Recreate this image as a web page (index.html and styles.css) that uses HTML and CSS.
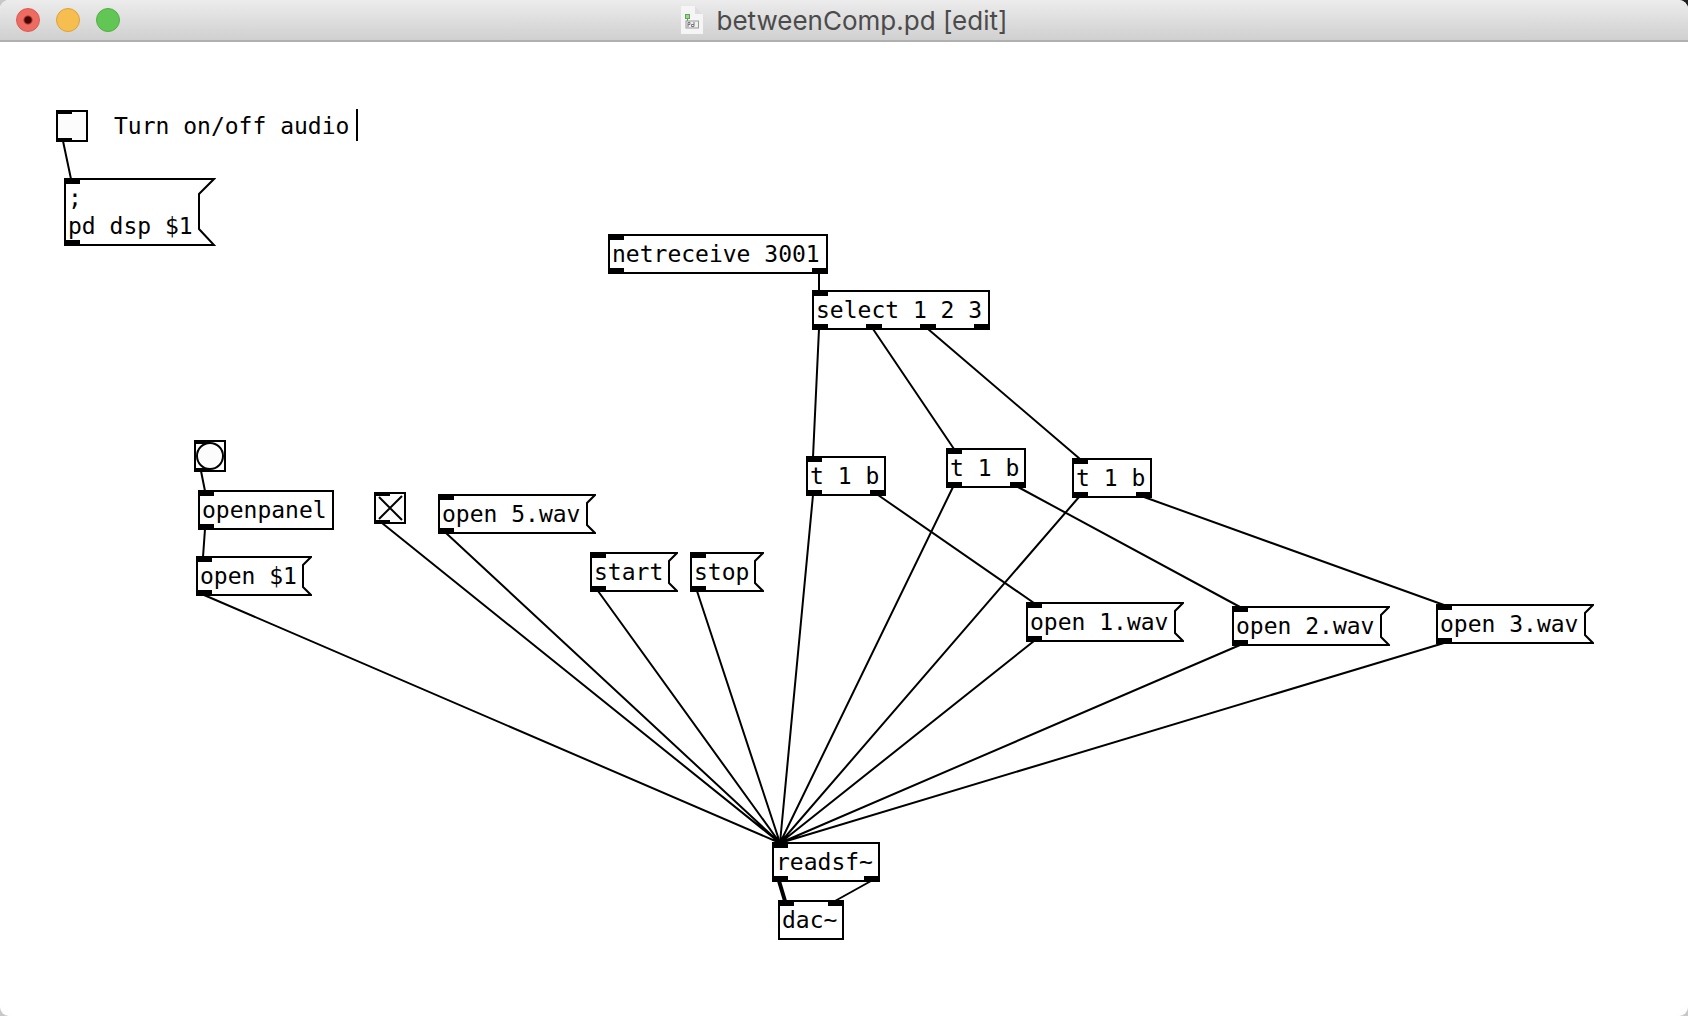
FILE: index.html
```html
<!DOCTYPE html>
<html lang="en">
<head>
<meta charset="utf-8">
<title>betweenComp.pd</title>
<link rel="stylesheet" href="styles.css">
</head>
<body>
<div class="window">
  <header class="titlebar">
    <div class="controls">
      <button class="light close" aria-label="Close"></button>
      <button class="light minimize" aria-label="Minimize"></button>
      <button class="light zoom" aria-label="Zoom"></button>
    </div>
    <h1 class="title">
      <svg class="doc" width="22" height="28" viewBox="0 0 22 28" aria-hidden="true">
        <path d="M0 0H14L22 8V28H0Z" fill="#f5f5f5"/>
        <path d="M14 0V8H22Z" fill="#dedede"/>
        <rect x="4.500" y="8.500" width="4" height="4" fill="#8fe07f" stroke="#6f9b69"/>
        <path d="M6.500 13V15" stroke="#888"/>
        <rect x="5" y="15" width="12.500" height="7" fill="#f0f0f0" stroke="#999"/>
        <path d="M7 21V16.500H9V18.500H7M13 16V20.500H10.500V18.500H13" fill="none" stroke="#777"/>
      </svg>
      <span>betweenComp.pd [edit]</span>
    </h1>
  </header>

  <main class="canvas">
    <svg class="wires" aria-hidden="true">
      <path d="M63 99L71 137M819 231V249M819 287L813 415M873 287L954 407M928 287L1080 417"/>
      <path d="M878 453L1034 561M1018 445L1240 565M1144 455L1444 563"/>
      <path d="M201 429L205 449M205 487L203 515"/>
      <path d="M204 553L780 801M382 481L780 801M446 491L780 801M598 549L780 801M697 549L780 801"/>
      <path d="M813 453L780 801M953 445L780 801M1079 455L780 801M1034 599L780 801M1240 603L780 801M1444 601L780 801"/>
      <path d="M871 839L835 859"/>
      <path class="signal" d="M779 839L785 859"/>
    </svg>

    <div class="node toggle audio">
      <input type="checkbox" id="audio"><i class="port in"></i><i class="port out"></i>
    </div>
    <label class="node comment" for="audio">Turn on/off audio</label>

    <button class="node message dsp"><span class="body">;<br>pd dsp $1</span><svg class="flag" width="18" height="68" viewBox="0 0 18 68"><path d="M0 1H16L1 16V51L16 67H0"/></svg><i class="port in"></i><i class="port out"></i></button>

    <div class="node object netreceive">netreceive 3001<i class="port in"></i><i class="port out"></i><i class="port out last"></i></div>
    <div class="node object select">select 1 2 3<i class="port in"></i><i class="port out"></i><i class="port out second"></i><i class="port out third"></i><i class="port out last"></i></div>

    <button class="node bang" aria-label="Bang"><svg width="32" height="32" viewBox="0 0 32 32"><circle cx="16" cy="16" r="13"/></svg><i class="port in"></i><i class="port out"></i></button>
    <div class="node object openpanel">openpanel<i class="port in"></i><i class="port out"></i></div>
    <button class="node message open-arg"><span class="body">open $1</span><svg class="flag" width="10" height="40" viewBox="0 0 10 40"><path d="M0 1H9L1 9V31L9 39H0"/></svg><i class="port in"></i><i class="port out"></i></button>

    <div class="node toggle play">
      <input type="checkbox" id="play" aria-label="Play" checked><svg width="32" height="32" viewBox="0 0 32 32"><path d="M5 5L28 28M28 4L5 27"/></svg><i class="port in"></i><i class="port out"></i>
    </div>
    <button class="node message open-5"><span class="body">open 5.wav</span><svg class="flag" width="10" height="40" viewBox="0 0 10 40"><path d="M0 1H9L1 9V31L9 39H0"/></svg><i class="port in"></i><i class="port out"></i></button>
    <button class="node message start"><span class="body">start</span><svg class="flag" width="10" height="40" viewBox="0 0 10 40"><path d="M0 1H9L1 9V31L9 39H0"/></svg><i class="port in"></i><i class="port out"></i></button>
    <button class="node message stop"><span class="body">stop</span><svg class="flag" width="10" height="40" viewBox="0 0 10 40"><path d="M0 1H9L1 9V31L9 39H0"/></svg><i class="port in"></i><i class="port out"></i></button>

    <div class="node object trigger-1">t 1 b<i class="port in"></i><i class="port out"></i><i class="port out last"></i></div>
    <div class="node object trigger-2">t 1 b<i class="port in"></i><i class="port out"></i><i class="port out last"></i></div>
    <div class="node object trigger-3">t 1 b<i class="port in"></i><i class="port out"></i><i class="port out last"></i></div>

    <button class="node message open-1"><span class="body">open 1.wav</span><svg class="flag" width="10" height="40" viewBox="0 0 10 40"><path d="M0 1H9L1 9V31L9 39H0"/></svg><i class="port in"></i><i class="port out"></i></button>
    <button class="node message open-2"><span class="body">open 2.wav</span><svg class="flag" width="10" height="40" viewBox="0 0 10 40"><path d="M0 1H9L1 9V31L9 39H0"/></svg><i class="port in"></i><i class="port out"></i></button>
    <button class="node message open-3"><span class="body">open 3.wav</span><svg class="flag" width="10" height="40" viewBox="0 0 10 40"><path d="M0 1H9L1 9V31L9 39H0"/></svg><i class="port in"></i><i class="port out"></i></button>

    <div class="node object readsf">readsf~<i class="port in"></i><i class="port out"></i><i class="port out last"></i></div>
    <div class="node object dac">dac~<i class="port in"></i><i class="port in last"></i></div>
  </main>
</div>
</body>
</html>
```
FILE: styles.css
```css
* { box-sizing: border-box; }

body {
  margin: 0;
  background: linear-gradient(#202020, #202020) top right / 20px 20px no-repeat #c8c8c8;
}

.window {
  display: flex;
  flex-direction: column;
  min-height: 100vh;
  border-radius: 9px;
  overflow: hidden;
  background: #fff;
}

/* Title bar */
.titlebar {
  display: grid;
  grid-template-columns: 1fr auto 1fr;
  align-items: center;
  height: 42px;
  padding: 0 16px;
  border-bottom: 2px solid #b0b0b0;
  background: linear-gradient(#ececec, #d0d0d0);
}

.controls { display: flex; gap: 16px; }

.light {
  width: 24px;
  height: 24px;
  padding: 0;
  border: 1px solid;
  border-radius: 50%;
}

.close {
  border-color: #d9574e;
  background: radial-gradient(circle, #480604 0 3px, #ed6b60 5px);
}

.minimize { border-color: #dba23c; background: #f6be4f; }
.zoom { border-color: #54ae44; background: #62c655; }

.title {
  display: flex;
  align-items: center;
  gap: 14px;
  margin: 0;
  padding-top: 2px;
  font: 400 26px/32px Inter, "Liberation Sans", sans-serif;
  color: #4b4b4b;
}

.doc { margin-bottom: 2px; }

/* Patch canvas */
.canvas {
  position: relative;
  flex: 1;
  min-height: 920px;
  font: 23px/28px "DejaVu Sans Mono", monospace;
  color: #000;
}

.wires {
  position: absolute;
  inset: 0;
  width: 100%;
  height: 100%;
  fill: none;
  stroke: #000;
  stroke-width: 2;
}

.signal { stroke-width: 4; }

.node {
  position: absolute;
  margin: 0;
  font: inherit;
  color: inherit;
  white-space: nowrap;
  text-align: left;
}

.object {
  height: 40px;
  padding: 4px 2px;
  border: 2px solid #000;
  background: #fff;
}

.message {
  display: flex;
  padding: 0;
  border: 0;
  background: none;
}

.body {
  flex: 1;
  padding: 4px 2px;
  border: solid #000;
  border-width: 2px 0 2px 2px;
}

.flag {
  display: block;
  flex: none;
  fill: none;
  stroke: #000;
  stroke-width: 2;
}

.toggle,
.bang {
  width: 32px;
  height: 32px;
}

.toggle input,
.bang {
  padding: 0;
  border: 2px solid #000;
  background: #fcfcfc;
}

.toggle input {
  display: block;
  appearance: none;
  width: 100%;
  height: 100%;
  margin: 0;
}

.toggle svg,
.bang svg {
  position: absolute;
  fill: none;
  stroke: #000;
  stroke-width: 2;
}

.toggle svg { inset: 0; }
.bang svg { inset: -2px; }

/* Inlets and outlets */
.port {
  position: absolute;
  left: 0;
  width: 16px;
  height: 6px;
  background: #000;
}

.in { top: 0; }
.out { bottom: 0; }
.toggle .port { height: 4px; }
.object .port, .bang .port { left: -2px; }
.object .in, .bang .in { top: -2px; }
.object .out, .bang .out { bottom: -2px; }
.bang .port { height: 4px; }
.object .port.last { left: auto; right: -2px; }
.object .port.second { left: 52px; }
.object .port.third { left: 106px; }

/* Node places on the canvas */
.audio { left: 56px; top: 68px; }
.comment { left: 114px; top: 67px; padding: 3px 0 1px; border-right: 2px solid #000; width: 244px; }
.dsp { left: 64px; top: 136px; width: 152px; }
.netreceive { left: 608px; top: 192px; width: 220px; }
.select { left: 812px; top: 248px; width: 178px; }
.bang { left: 194px; top: 398px; }
.openpanel { left: 198px; top: 448px; width: 136px; }
.open-arg { left: 196px; top: 514px; width: 116px; }
.play { left: 374px; top: 450px; }
.open-5 { left: 438px; top: 452px; width: 158px; }
.start { left: 590px; top: 510px; width: 88px; }
.stop { left: 690px; top: 510px; width: 74px; }
.trigger-1 { left: 806px; top: 414px; width: 80px; }
.trigger-2 { left: 946px; top: 406px; width: 80px; }
.trigger-3 { left: 1072px; top: 416px; width: 80px; }
.open-1 { left: 1026px; top: 560px; width: 158px; }
.open-2 { left: 1232px; top: 564px; width: 158px; }
.open-3 { left: 1436px; top: 562px; width: 158px; }
.readsf { left: 772px; top: 800px; width: 108px; }
.dac { left: 778px; top: 858px; width: 66px; }
```
